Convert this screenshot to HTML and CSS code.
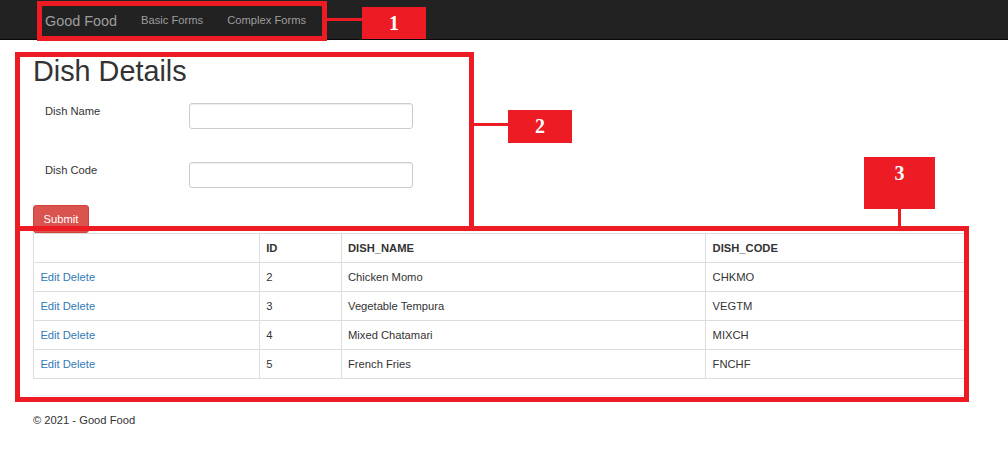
FILE: index.html
```html
<!DOCTYPE html>
<html lang="en">
<head>
<meta charset="utf-8">
<title>Dish Details - Good Food</title>
<link rel="stylesheet" href="styles.css">
</head>
<body>
<nav class="navbar">
  <div class="nav-inner">
    <a class="brand" href="#">Good Food</a>
    <a class="nav-link" href="#">Basic Forms</a>
    <a class="nav-link" href="#">Complex Forms</a>
  </div>
</nav>
<main class="container">
  <h1 class="title">Dish Details</h1>
  <form class="dish-form">
    <div class="form-row">
      <label class="form-label">Dish Name</label>
      <input class="form-input" type="text">
    </div>
    <div class="form-row">
      <label class="form-label">Dish Code</label>
      <input class="form-input" type="text">
    </div>
    <button class="btn-submit" type="button">Submit</button>
  </form>
  <table class="dish-table">
    <colgroup>
      <col class="c-actions"><col class="c-id"><col class="c-name"><col class="c-code">
    </colgroup>
    <thead>
      <tr><th></th><th>ID</th><th>DISH_NAME</th><th>DISH_CODE</th></tr>
    </thead>
    <tbody>
      <tr><td><a href="#">Edit</a> <a href="#">Delete</a></td><td>2</td><td>Chicken Momo</td><td>CHKMO</td></tr>
      <tr><td><a href="#">Edit</a> <a href="#">Delete</a></td><td>3</td><td>Vegetable Tempura</td><td>VEGTM</td></tr>
      <tr><td><a href="#">Edit</a> <a href="#">Delete</a></td><td>4</td><td>Mixed Chatamari</td><td>MIXCH</td></tr>
      <tr><td><a href="#">Edit</a> <a href="#">Delete</a></td><td>5</td><td>French Fries</td><td>FNCHF</td></tr>
    </tbody>
  </table>
  <hr class="rule">
  <footer class="footer">© 2021 - Good Food</footer>
</main>

<div class="annot box1"></div>
<div class="annot-line conn1"></div>
<div class="annot-label label1">1</div>
<div class="annot box2"></div>
<div class="annot-line conn2"></div>
<div class="annot-label label2">2</div>
<div class="annot box3"></div>
<div class="annot-line conn3"></div>
<div class="annot-label label3">3</div>
</body>
</html>
```
FILE: styles.css
```css
* { box-sizing: border-box; }

html, body {
  margin: 0;
  padding: 0;
  background: #ffffff;
}

body {
  position: relative;
  width: 1008px;
  height: 459px;
  overflow: hidden;
  font-family: "Liberation Sans", Arial, sans-serif;
  font-size: 11.2px;
  line-height: 16px;
  color: #333333;
}

a { text-decoration: none; }

/* navbar */
.navbar {
  height: 40px;
  background: #222222;
  border-bottom: 1px solid #080808;
}
.nav-inner {
  display: flex;
  padding-left: 33px;
}
.brand {
  padding: 13px 12px 0 12px;
  font-size: 14.4px;
  line-height: 16px;
  color: #9d9d9d;
}
.nav-link {
  padding: 12px 12px 0 12px;
  font-size: 11.2px;
  line-height: 16px;
  color: #9d9d9d;
}

/* content */
.container {
  padding: 0 43px 0 33px;
}
.title {
  margin: 15px 0 0 0;
  font-size: 28.8px;
  line-height: 32px;
  font-weight: normal;
  color: #333333;
}
.dish-form {
  display: flex;
  flex-direction: column;
  align-items: flex-start;
  margin-top: 16px;
}
.form-row {
  display: grid;
  grid-template-columns: 156px 224px;
  margin-bottom: 33px;
}
.form-row:nth-child(2) { margin-bottom: 17px; }
.form-label {
  padding-left: 12px;
  font-weight: normal;
  color: #333333;
}
.form-input {
  height: 26px;
  border: 1px solid #cccccc;
  border-radius: 3px;
  background: #ffffff;
  box-shadow: inset 0 1px 1px rgba(0, 0, 0, 0.075);
  font: inherit;
  padding: 0 9px;
}
.btn-submit {
  height: 28px;
  padding: 0 9.6px;
  border: 1px solid #d43f3a;
  border-radius: 3px;
  background: #d9534f;
  color: #ffffff;
  font-family: "Liberation Sans", Arial, sans-serif;
  font-size: 11.2px;
  line-height: 16px;
}

/* table */
.dish-table {
  width: 932px;
  border-collapse: collapse;
  border: 1px solid #dddddd;
}
.c-actions { width: 226px; }
.c-id { width: 82px; }
.c-name { width: 365px; }
.c-code { width: 259px; }
.dish-table th,
.dish-table td {
  border: 1px solid #dddddd;
  padding: 6px 6.4px;
  line-height: 16px;
  text-align: left;
  vertical-align: top;
}
.dish-table th { font-weight: bold; }
.dish-table a { color: #337ab7; }

.rule {
  margin: 16px 0 0 0;
  border: 0;
  border-top: 1px solid #eeeeee;
  height: 0;
}
.footer {
  margin-top: 16px;
}

/* annotation overlays */
.annot {
  position: absolute;
  border: 5px solid #ed1c24;
}
.annot-line {
  position: absolute;
  background: #ed1c24;
}
.annot-label {
  position: absolute;
  background: #ed1c24;
  color: #ffffff;
  font-family: "Liberation Serif", "Times New Roman", serif;
  font-weight: bold;
  font-size: 20px;
  line-height: 20px;
  text-align: center;
  padding-top: 6px;
}
.box1 { left: 37px; top: 1px; width: 290px; height: 40px; }
.conn1 { left: 327px; top: 18px; width: 35px; height: 3px; }
.label1 { left: 362px; top: 7px; width: 64px; height: 32px; }

.box2 { left: 15px; top: 52px; width: 459px; height: 179px; }
.conn2 { left: 474px; top: 123px; width: 34px; height: 3px; }
.label2 { left: 508px; top: 110px; width: 64px; height: 33px; }

.box3 { left: 15px; top: 226px; width: 954px; height: 176px; }
.conn3 { left: 898px; top: 209px; width: 3px; height: 17px; }
.label3 { left: 864px; top: 157px; width: 71px; height: 52px; }
```
